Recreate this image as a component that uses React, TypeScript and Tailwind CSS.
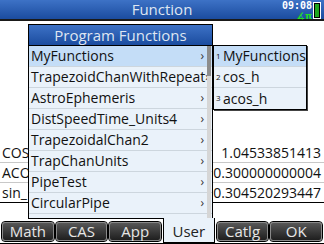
import React from 'react';

const font = { fontFamily: '"Open Sans", "Noto Sans", sans-serif' };

const programs = [
  'MyFunctions',
  'TrapezoidChanWithRepeat',
  'AstroEphemeris',
  'DistSpeedTime_Units4',
  'TrapezoidalChan2',
  'TrapChanUnits',
  'PipeTest',
  'CircularPipe',
  'DistSpeedTime_Units5',
];

const subItems = ['MyFunctions', 'cos_h', 'acos_h'];

const history = [
  { input: 'COS', result: '1.04533851413', line: 'border-[#c8c8c8]' },
  { input: 'ACO', result: '0.300000000004', line: 'border-[#c8c8c8]' },
  { input: 'sin_', result: '0.304520293447', line: 'border-black' },
];

const softkeys = ['Math', 'CAS', 'App', 'User', 'Catlg', 'OK'];

export default function App() {
  return (
    <div className="relative w-[324px] h-[244px] bg-white overflow-hidden flex flex-col text-[#111]" style={font}>
      {/* TITLE BAR */}
      <div className="relative h-[21px] shrink-0 bg-gradient-to-b from-[#3d72c6] to-[#1b4c9f] border-b-2 border-[#1a1a1a] flex items-center justify-center">
        <span className="text-[15px] leading-none text-[#dfe6f2] -mt-[1px]">Function</span>
        <div className="absolute right-[12px] top-[1px] flex flex-col items-end leading-none">
          <span className="text-[10px] font-bold text-white" style={{ fontFamily: '"DejaVu Sans Mono", monospace' }}>09:08</span>
          <span className="text-[9px] font-bold text-[#22e022] mt-[1px]" style={{ fontFamily: '"DejaVu Sans", sans-serif' }}>∡π</span>
        </div>
        <div className="absolute right-[3px] top-[2px] w-[8px] h-[17px] bg-black border border-white p-[1px]">
          <div className="w-full h-full bg-[#1fa51f]" />
        </div>
      </div>

      {/* HISTORY */}
      <div className="flex-1 flex flex-col justify-end pb-[15px]">
        {history.map((h) => (
          <div key={h.result} className={`h-[20px] flex items-center justify-between px-[2px] pr-[3px] border-b ${h.line} text-[14px] leading-none`}>
            <span>{h.input}</span>
            <span>{h.result}</span>
          </div>
        ))}
      </div>

      {/* SOFTKEYS */}
      <div className="relative z-20 h-[26px] shrink-0 flex gap-[2px] px-[2px] pt-[4px] pb-[2px] border-b border-black">
        {softkeys.map((k) =>
          k === 'User' ? (
            <div key={k} className="flex-1 -mt-[4px] mb-[-2px] bg-[#eaf2fa] border-x border-b border-black flex items-center justify-center pt-[3px] text-[15px] text-[#222]">
              {k}
            </div>
          ) : (
            <div
              key={k}
              className="flex-1 rounded-[3px] border border-[#8a8a8a] outline outline-1 outline-black bg-gradient-to-b from-[#575757] to-[#1f1f1f] flex items-center justify-center text-[15px] text-[#e6e6e6] leading-none"
            >
              {k}
            </div>
          )
        )}
      </div>

      {/* PROGRAM FUNCTIONS MENU */}
      <div className="absolute left-[28px] top-[24px] w-[185px] h-[195px] border border-black bg-[#eaf2fa] overflow-hidden z-10">
        <div className="h-[21px] bg-gradient-to-b from-[#3d72c6] to-[#1b4c9f] border-b border-black flex items-center justify-center">
          <span className="text-[15px] leading-none text-[#dfe6f2]">Program Functions</span>
        </div>
        <div className="relative">
          {programs.map((p, i) => (
            <div
              key={p}
              className={`h-[21px] flex items-center justify-between pl-[2px] pr-[8px] border-b border-[#cdd6de] text-[14px] leading-none ${i === 0 ? 'bg-[#c4ddf7]' : ''}`}
            >
              <span className="whitespace-nowrap">{p}</span>
              <span className="text-[12px] text-[#333]">›</span>
            </div>
          ))}
          <div className="absolute right-[1px] top-0 w-[4px] h-full bg-[#d6d6d6]">
            <div className="w-full h-[30px] bg-[#8c8c8c]" />
          </div>
        </div>
      </div>

      {/* SUBMENU */}
      <div className="absolute left-[213px] top-[45px] w-[94px] border border-black shadow-[1px_1px_0_#444] bg-[#eaf2fa] z-10">
        {subItems.map((s, i) => (
          <div
            key={s}
            className={`h-[21px] flex items-center pl-[2px] border-b border-[#cdd6de] last:border-b-0 text-[14px] leading-none ${i === 0 ? 'bg-[#c4ddf7]' : ''}`}
          >
            <span className="text-[8px] w-[7px] -mt-[1px]">{i + 1}</span>
            <span>{s}</span>
          </div>
        ))}
      </div>
    </div>
  );
}
